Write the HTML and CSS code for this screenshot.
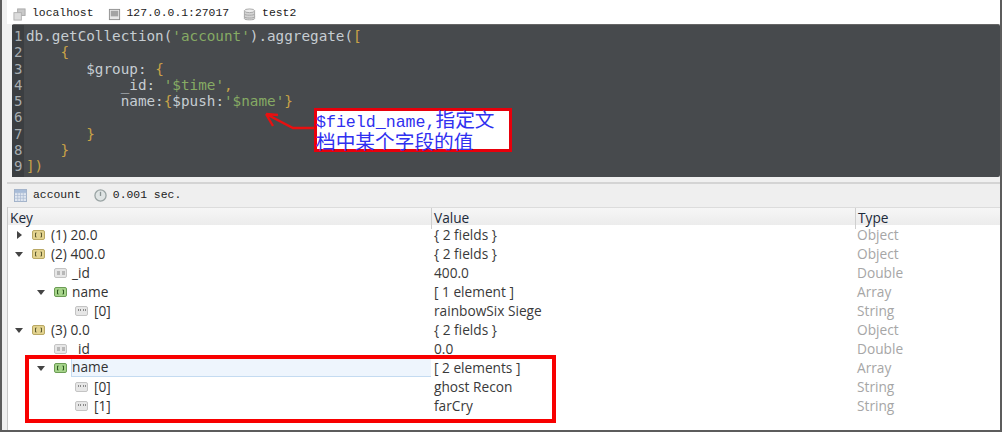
FILE: index.html
```html
<!DOCTYPE html>
<html lang="zh">
<head>
<meta charset="utf-8">
<title>Robomongo aggregate</title>
<link rel="stylesheet" href="styles.css">
</head>
<body>
<svg class="defs" width="0" height="0" aria-hidden="true">
  <defs>
    <symbol id="i-obj" viewBox="0 0 13 10"><rect x=".5" y=".5" width="12" height="9" rx="1.5" fill="#e3d38f" stroke="#b9a864"/><path d="M4.500 3H3.500V7H4.500M8.500 3H9.500V7H8.500" fill="none" stroke="#5c5a30"/></symbol>
    <symbol id="i-arr" viewBox="0 0 13 10"><rect x=".5" y=".5" width="12" height="9" rx="1.500" fill="#a6d48a" stroke="#6c9c55"/><path d="M4.500 3H3.500V7H4.500M8.500 3H9.500V7H8.500" fill="none" stroke="#2f5a20"/></symbol>
    <symbol id="i-num" viewBox="0 0 13 10"><rect x=".5" y=".5" width="12" height="9" rx="1.500" fill="#e6e6e6" stroke="#c4c4c4"/><path d="M3 4H6M3 6H6M8 4H11M8 6H11" stroke="#8a8a8a"/></symbol>
    <symbol id="i-str" viewBox="0 0 13 10"><rect x=".5" y=".5" width="12" height="9" rx="1.500" fill="#e6e6e6" stroke="#c4c4c4"/><path d="M3.500 3V5M5.500 3V5M8.500 3V5M10.500 3V5" stroke="#8a8a8a"/></symbol>
  </defs>
</svg>
<main class="app">
  <header class="bar">
    <svg class="tico" viewBox="0 0 14 14"><rect x="5" y="1" width="8" height="7" fill="#c8c8c8" stroke="#a8a8a8"/><rect x="1" y="5" width="8" height="8" fill="#dcdcdc" stroke="#b0b0b0"/></svg>
    <span class="mono">localhost</span>
    <svg class="tico gap" viewBox="0 0 14 14"><rect x="1.500" y="1.500" width="11" height="11" fill="#e8e8e8" stroke="#8e8e8e"/><rect x="3" y="3" width="8" height="6" fill="#a4a4a4"/></svg>
    <span class="mono">127.0.0.1:27017</span>
    <svg class="tico gap" viewBox="0 0 14 14"><path d="M1.500 3V11.500C1.500 13.200 12.500 13.200 12.500 11.500V3" fill="#d4d4d4" stroke="#a4a4a4"/><ellipse cx="7" cy="3" rx="5.500" ry="2" fill="#ececec" stroke="#a4a4a4"/><path d="M1.500 6.500C1.500 8.200 12.500 8.200 12.500 6.500M1.500 9.500C1.500 11.200 12.500 11.200 12.500 9.500" fill="none" stroke="#a4a4a4"/></svg>
    <span class="mono">test2</span>
  </header>

  <section class="editor">
    <ol class="gutter"><li>1</li><li>2</li><li>3</li><li>4</li><li>5</li><li>6</li><li>7</li><li>8</li><li>9</li></ol>
    <pre class="code">db.getCollection(<s>'account'</s>).aggregate(<b>[</b>
    <b>{</b>
       $group: <b>{</b>
           _id: <s>'$time'</s><b>,</b>
           name:<b>{</b>$push:<s>'$name'</s><b>}</b>

       <b>}</b>
    <b>}</b>
<b>])</b></pre>
    <svg class="arrow" viewBox="0 0 52 18" width="52" height="18"><path d="M51 16H30L3 2M3 2L15 3M3 2L10 14" fill="none" stroke="#e81010" stroke-width="2.400"/></svg>
    <div class="note">
      <div class="note-line"><span class="note-lat">$field_name,</span>指定文</div>
      <div class="note-line">档中某个字段的值</div>
    </div>
  </section>

  <section class="info">
    <svg class="tico" viewBox="0 0 14 14"><rect x=".5" y=".5" width="13" height="13" fill="#dfe6f0" stroke="#9fb0c8"/><path d="M0 4H14M0 7H14M0 10H14M4 4V14M7 4V14M10 4V14" stroke="#a8b8d0" stroke-width=".7"/><rect x="1" y="1" width="12" height="3" fill="#a8bcd8"/></svg>
    <span class="mono">account</span>
    <svg class="tico clock" viewBox="0 0 14 14"><circle cx="7" cy="7" r="6" fill="#dfe4e4" stroke="#9aa4a4" stroke-width="1.400"/><path d="M7 3V7.500" stroke="#8a9494" stroke-width="1.400"/></svg>
    <span class="mono">0.001 sec.</span>
  </section>

  <section class="table">
    <div class="row head"><div class="c key">Key</div><div class="c val">Value</div><div class="c typ">Type</div></div>
    <div class="row"><div class="c key d0"><i class="tw closed"></i><svg class="ic"><use href="#i-obj"/></svg>(1) 20.0</div><div class="c val">{ 2 fields }</div><div class="c typ">Object</div></div>
    <div class="row"><div class="c key d0"><i class="tw"></i><svg class="ic"><use href="#i-obj"/></svg>(2) 400.0</div><div class="c val">{ 2 fields }</div><div class="c typ">Object</div></div>
    <div class="row"><div class="c key d1"><i class="tw none"></i><svg class="ic"><use href="#i-num"/></svg>_id</div><div class="c val">400.0</div><div class="c typ">Double</div></div>
    <div class="row"><div class="c key d1"><i class="tw"></i><svg class="ic"><use href="#i-arr"/></svg>name</div><div class="c val">[ 1 element ]</div><div class="c typ">Array</div></div>
    <div class="row"><div class="c key d2"><i class="tw none"></i><svg class="ic"><use href="#i-str"/></svg>[0]</div><div class="c val">rainbowSix Siege</div><div class="c typ">String</div></div>
    <div class="row"><div class="c key d0"><i class="tw"></i><svg class="ic"><use href="#i-obj"/></svg>(3) 0.0</div><div class="c val">{ 2 fields }</div><div class="c typ">Object</div></div>
    <div class="row"><div class="c key d1"><i class="tw none"></i><svg class="ic"><use href="#i-num"/></svg>_id</div><div class="c val">0.0</div><div class="c typ">Double</div></div>
    <div class="row"><div class="c key d1"><i class="tw"></i><svg class="ic"><use href="#i-arr"/></svg><span class="sel">name</span></div><div class="c val">[ 2 elements ]</div><div class="c typ">Array</div></div>
    <div class="row"><div class="c key d2"><i class="tw none"></i><svg class="ic"><use href="#i-str"/></svg>[0]</div><div class="c val">ghost Recon</div><div class="c typ">String</div></div>
    <div class="row"><div class="c key d2"><i class="tw none"></i><svg class="ic"><use href="#i-str"/></svg>[1]</div><div class="c val">farCry</div><div class="c typ">String</div></div>
    <div class="mark"></div>
  </section>
</main>
</body>
</html>
```
FILE: styles.css
```css
* { box-sizing: border-box; }
html, body { margin: 0; height: 100%; overflow: hidden; background: #fff; }
.defs { position: absolute; }
.app {
  width: 1002px; height: 432px;
  display: flex; flex-direction: column;
  border-left: 2px solid #5c5c5c;
  border-right: 2px solid #5c5c5c;
  border-bottom: 2px solid #5c5c5c;
  background: #f0f0f0;
  font-family: "Open Sans", "Liberation Sans", sans-serif;
}
.mono { font: 11.4px/1 "Liberation Mono", monospace; color: #222; }
.bar {
  height: 24px; flex: none;
  margin-left: 5px;
  padding: 4px 0 0 6px;
  display: flex; align-items: center; gap: 6px;
  background: #fff;
}
.tico { width: 13px; height: 13px; flex: none; }
.gap { margin-left: 8px; }
.clock { margin-left: 7px; }

.editor {
  position: relative;
  height: 153px; flex: none;
  margin-left: 10px;
  display: flex;
  background: #474a4d;
  border-top: 1px solid #666;
  border-radius: 2px;
}
.gutter {
  list-style: none; margin: 0; padding: 3px 0 0 2px;
  width: 12px; flex: none;
  background: #3b3e41;
  color: #a8adb0;
  font: 14px/16.300px "DejaVu Sans Mono", monospace;
}
.code {
  margin: 0; padding: 3px 0 0 2px;
  color: #c6cdd2;
  font: 14.3px/16.300px "DejaVu Sans Mono", monospace;
}
.code s { text-decoration: none; color: #86ab64; }
.code b { font-weight: 400; color: #c9a247; }
.note {
  position: absolute; left: 302px; top: 83px;
  width: 198px; height: 44px;
  padding-left: 0;
  background: #fff;
  border: 3px solid #e8000b;
  color: #3030f0;
  font: 19.7px/22px "Noto Sans CJK SC", sans-serif;
  white-space: nowrap;
}
.note-line { height: 22px; margin-left: -1px; }
.note-line:first-child { margin-top: -3px; }
.note-lat { font: 16.600px/22px "Liberation Mono", monospace; }
.arrow { position: absolute; left: 251px; top: 87px; }

.info {
  height: 25px; flex: none;
  margin-top: 5px;
  margin-left: 5px;
  padding: 0 0 0 7px;
  display: flex; align-items: center; gap: 6px;
  border-top: 2px solid #d4d4d4;
  background: #efefef;
}

.table {
  position: relative;
  flex: 1;
  margin-left: 5px;
  border-left: 1px solid #c8c8c8;
  background: #fff;
  font-size: 13.7px;
  color: #333;
}
.row {
  height: 19px;
  display: grid;
  grid-template-columns: 423px 424px 1fr;
  line-height: 19px;
  white-space: nowrap;
}
.head {
  height: 18px;
  background: linear-gradient(#f6f6f6, #ececec);
  border-top: 1px solid #dcdcdc;
  color: #1c2a3a;
}
.head .c { padding: 0 0 2px 2px; }
.head .val, .head .typ { border-left: 1px solid #cfcfcf; color: #1c2a3a; }
.c { display: flex; align-items: center; min-width: 0; }
.val { padding-left: 3px; color: #3a3a3a; }
.typ { padding-left: 2px; color: #a6a6a6; }
.d0 { padding-left: 7px; }
.d1 { padding-left: 29px; }
.d2 { padding-left: 50px; }
.tw { flex: none; width: 10px; height: 10px; margin-right: 7px; position: relative; }
.tw::before {
  content: ""; position: absolute; left: 0; top: 3px;
  border-left: 4px solid transparent; border-right: 4px solid transparent;
  border-top: 5px solid #444;
}
.tw.closed::before {
  left: 2px; top: 1px;
  border-top: 4px solid transparent; border-bottom: 4px solid transparent;
  border-left: 5px solid #444; border-right: 0;
}
.tw.none::before { display: none; }
.ic { flex: none; width: 13px; height: 10px; margin-right: 6px; }
.d1 .ic { margin-right: 5px; }
.sel {
  flex: 1; height: 19px; margin-left: -1px;
  background: #eef5fd;
  border-left: 1px solid #c4dbf1;
  border-bottom: 1px solid #c4dbf1;
  line-height: 18px;
}
.mark {
  position: absolute; left: 17px; top: 148px;
  width: 531px; height: 68px;
  border: 4px solid #f80000;
  pointer-events: none;
}
```
